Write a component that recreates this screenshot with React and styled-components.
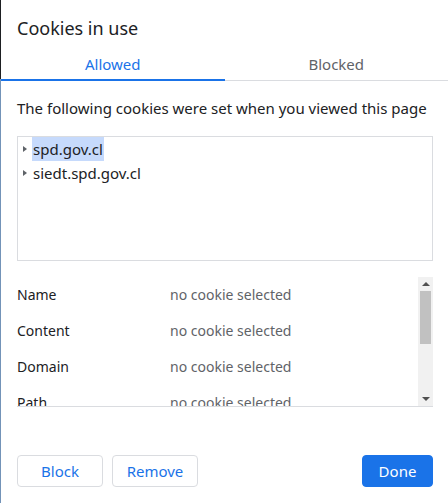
import React, { useState } from "react";
import styled, { createGlobalStyle } from "styled-components";

const GlobalStyle = createGlobalStyle`
  html, body {
    margin: 0;
    padding: 0;
    background: #ffffff;
  }
  body {
    font-family: "Noto Sans", "Open Sans", sans-serif;
    color: #202124;
  }
`;

const cookieSites = ["spd.gov.cl", "siedt.spd.gov.cl"];
const detailFields = ["Name", "Content", "Domain", "Path"];

function App() {
  const [tab, setTab] = useState("allowed");
  const [selected, setSelected] = useState(0);

  return (
    <>
      <GlobalStyle />
      <Dialog>
        <Title>Cookies in use</Title>
        <TabBar>
          <Tab $active={tab === "allowed"} onClick={() => setTab("allowed")}>
            Allowed
          </Tab>
          <Tab $active={tab === "blocked"} onClick={() => setTab("blocked")}>
            Blocked
          </Tab>
        </TabBar>
        <Body>
          <Description>
            The following cookies were set when you viewed this page
          </Description>
          <TreeBox>
            {cookieSites.map((site, i) => (
              <TreeRow key={site} onClick={() => setSelected(i)}>
                <Expander />
                <TreeLabel $selected={selected === i}>{site}</TreeLabel>
              </TreeRow>
            ))}
          </TreeBox>
          <Details>
            <DetailRows>
              {detailFields.map((field) => (
                <DetailRow key={field}>
                  <FieldName>{field}</FieldName>
                  <FieldValue>no cookie selected</FieldValue>
                </DetailRow>
              ))}
            </DetailRows>
            <ScrollBar>
              <ScrollArrow>
                <Triangle $up />
              </ScrollArrow>
              <ScrollThumb />
              <ScrollTrack />
              <ScrollArrow>
                <Triangle />
              </ScrollArrow>
            </ScrollBar>
          </Details>
        </Body>
        <Footer>
          <Button $width="86px">Block</Button>
          <Button $width="86px">Remove</Button>
          <Spacer />
          <Button $width="71px" $primary>
            Done
          </Button>
        </Footer>
      </Dialog>
    </>
  );
}

const Dialog = styled.div`
  width: 448px;
  height: 503px;
  box-sizing: border-box;
  display: flex;
  flex-direction: column;
  background: #ffffff;
  border-left: 1px solid #7393b8;
  border-image: linear-gradient(to bottom, #1d1f22 0, #1d1f22 80px, #7393b8 80px) 1;
  overflow: hidden;
`;

const Title = styled.div`
  padding: 16px 16px 8px;
  font-size: 18px;
  line-height: 24px;
  color: #202124;
`;

const TabBar = styled.div`
  display: flex;
  border-bottom: 1px solid #dadce0;
`;

const Tab = styled.div`
  flex: 1;
  height: 33px;
  margin-bottom: -1px;
  box-sizing: border-box;
  display: flex;
  align-items: center;
  justify-content: center;
  font-size: 15px;
  color: ${(p) => (p.$active ? "#1a73e8" : "#5f6368")};
  border-bottom: 2px solid ${(p) => (p.$active ? "#1a73e8" : "transparent")};
  cursor: pointer;
`;

const Body = styled.div`
  display: flex;
  flex-direction: column;
  padding: 0 15px 0 16px;
`;

const Description = styled.div`
  margin-top: 17px;
  font-size: 15px;
  line-height: 20px;
  color: #202124;
`;

const TreeBox = styled.div`
  margin-top: 18px;
  height: 125px;
  box-sizing: border-box;
  border: 1px solid #dadce0;
  display: flex;
  flex-direction: column;
`;

const TreeRow = styled.div`
  display: flex;
  align-items: center;
  height: 24px;
  padding-left: 5px;
  cursor: default;
`;

const Expander = styled.span`
  width: 0;
  height: 0;
  border-top: 3.5px solid transparent;
  border-bottom: 3.5px solid transparent;
  border-left: 4px solid #5f6368;
  margin-right: 5px;
`;

const TreeLabel = styled.span`
  font-size: 15px;
  line-height: 24px;
  padding: 0 1px;
  color: #202124;
  background: ${(p) => (p.$selected ? "#c6dafc" : "transparent")};
`;

const Details = styled.div`
  margin-top: 16px;
  height: 130px;
  box-sizing: border-box;
  border-bottom: 1px solid #dadce0;
  display: flex;
  overflow: hidden;
`;

const DetailRows = styled.div`
  flex: 1;
  display: flex;
  flex-direction: column;
  margin-top: -1px;
`;

const DetailRow = styled.div`
  display: flex;
  align-items: center;
  height: 36px;
  flex-shrink: 0;
  font-size: 14px;
`;

const FieldName = styled.span`
  width: 153px;
  color: #202124;
`;

const FieldValue = styled.span`
  color: #5f6368;
`;

const ScrollBar = styled.div`
  width: 15px;
  display: flex;
  flex-direction: column;
  background: #f1f1f1;
`;

const ScrollArrow = styled.div`
  height: 14px;
  display: flex;
  align-items: center;
  justify-content: center;
`;

const Triangle = styled.span`
  width: 0;
  height: 0;
  border-left: 4px solid transparent;
  border-right: 4px solid transparent;
  ${(p) =>
    p.$up ? "border-bottom: 4px solid #505050;" : "border-top: 4px solid #505050;"}
`;

const ScrollThumb = styled.div`
  height: 53px;
  margin: 0 2px;
  background: #c1c1c1;
`;

const ScrollTrack = styled.div`
  flex: 1;
`;

const Footer = styled.div`
  margin-top: auto;
  display: flex;
  align-items: center;
  gap: 9px;
  padding: 0 15px 16px 16px;
`;

const Spacer = styled.div`
  flex: 1;
`;

const Button = styled.button`
  width: ${(p) => p.$width};
  height: 32px;
  padding: 0;
  box-sizing: border-box;
  border-radius: 4px;
  font-family: "Noto Sans", "Open Sans", sans-serif;
  font-size: 15px;
  cursor: pointer;
  border: 1px solid ${(p) => (p.$primary ? "#1a73e8" : "#dadce0")};
  background: ${(p) => (p.$primary ? "#1a73e8" : "#ffffff")};
  color: ${(p) => (p.$primary ? "#ffffff" : "#1a73e8")};
`;

export default App;
